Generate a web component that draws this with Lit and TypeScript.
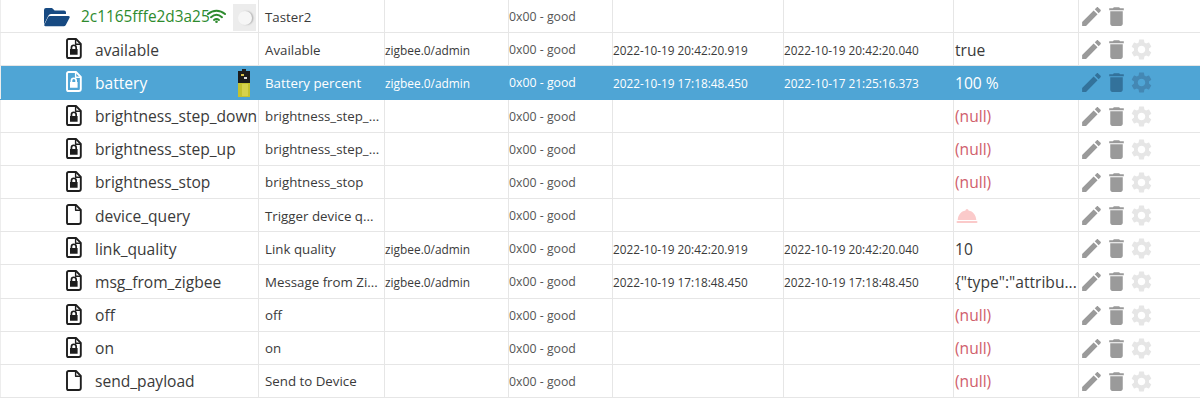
import { LitElement, html, css, svg } from "lit";
import { customElement } from "lit/decorators.js";

const PENCIL = "M20.71,7.04C21.1,6.65 21.1,6 20.71,5.63L18.37,3.29C18,2.9 17.35,2.9 16.96,3.29L15.12,5.12L18.87,8.87M3,17.25V21H6.75L17.81,9.93L14.06,6.18L3,17.25Z";
const TRASH = "M6 19c0 1.1.9 2 2 2h8c1.1 0 2-.9 2-2V7H6v12zM19 4h-3.5l-1-1h-5l-1 1H5v2h14V4z";
const GEAR = "M19.14,12.94c0.04-0.3,0.06-0.61,0.06-0.94c0-0.32-0.02-0.64-0.07-0.94l2.03-1.58c0.18-0.14,0.23-0.41,0.12-0.61l-1.92-3.32c-0.12-0.22-0.37-0.29-0.59-0.22l-2.39,0.96c-0.5-0.38-1.03-0.7-1.62-0.94L14.4,2.81c-0.04-0.24-0.24-0.41-0.48-0.41h-3.84c-0.24,0-0.43,0.17-0.47,0.41L9.25,5.35C8.66,5.59,8.12,5.92,7.63,6.29L5.24,5.33c-0.22-0.08-0.47,0-0.59,0.22L2.74,8.87C2.62,9.08,2.66,9.34,2.86,9.48l2.03,1.58C4.84,11.36,4.8,11.69,4.8,12s0.02,0.64,0.07,0.94l-2.03,1.58c-0.18,0.14-0.23,0.41-0.12,0.61l1.92,3.32c0.12,0.22,0.37,0.29,0.59,0.22l2.39-0.96c0.5,0.38,1.03,0.7,1.62,0.94l0.36,2.54c0.05,0.24,0.24,0.41,0.48,0.41h3.84c0.24,0,0.44-0.17,0.47-0.41l0.36-2.54c0.59-0.24,1.13-0.56,1.62-0.94l2.39,0.96c0.22,0.08,0.47,0,0.59-0.22l1.92-3.32c0.12-0.22,0.07-0.47-0.12-0.61L19.14,12.94z M12,15.6c-1.98,0-3.6-1.62-3.6-3.6s1.62-3.6,3.6-3.6s3.6,1.62,3.6,3.6S13.98,15.6,12,15.6z";

interface Row {
  name: string;
  desc: string;
  admin?: boolean;
  ts?: string;
  lc?: string;
  val?: string;
  kind?: "null" | "bell";
  locked?: boolean;
  sel?: boolean;
  battery?: boolean;
}

const D1 = "2022-10-19 20:42:20.919";
const D2 = "2022-10-19 20:42:20.040";
const D3 = "2022-10-19 17:18:48.450";

const rows: Row[] = [
  { name: "available", desc: "Available", admin: true, ts: D1, lc: D2, val: "true", locked: true },
  { name: "battery", desc: "Battery percent", admin: true, ts: D3, lc: "2022-10-17 21:25:16.373", val: "100 %", locked: true, sel: true, battery: true },
  { name: "brightness_step_down", desc: "brightness_step_...", kind: "null", locked: true },
  { name: "brightness_step_up", desc: "brightness_step_...", kind: "null", locked: true },
  { name: "brightness_stop", desc: "brightness_stop", kind: "null", locked: true },
  { name: "device_query", desc: "Trigger device q...", kind: "bell" },
  { name: "link_quality", desc: "Link quality", admin: true, ts: D1, lc: D2, val: "10", locked: true },
  { name: "msg_from_zigbee", desc: "Message from Zi...", admin: true, ts: D3, lc: D3, val: '{"type":"attribu...', locked: true },
  { name: "off", desc: "off", kind: "null", locked: true },
  { name: "on", desc: "on", kind: "null", locked: true },
  { name: "send_payload", desc: "Send to Device", kind: "null" },
];

const icon = (d: string, cls: string) => html`<svg class=${cls} viewBox="0 0 24 24"><path d=${d}></path></svg>`;

const fileIcon = (locked?: boolean) => html`<svg class="file" viewBox="0 0 16 21">
  <path class="outline" d="M2.6 1H10l4.8 4.8V18a2 2 0 0 1-2 2H2.6a1.6 1.6 0 0 1-1.6-1.6V2.6A1.6 1.6 0 0 1 2.6 1Z"></path>
  <path class="outline thin" d="M9.6 1.2V6.2h5"></path>
  ${locked
    ? svg`<path class="lock" d="M4.6 11V9.6a3.2 3.2 0 0 1 6.4 0V11h.6v5.8H4V11Zm1.7 0h3V9.6a1.5 1.5 0 0 0-3 0Z"></path>`
    : ""}
</svg>`;

@customElement("app-root")
export class AppRoot extends LitElement {
  static styles = css`
    :host { display: block; width: 1200px; height: 400px; overflow: hidden; background: #fff; font-family: "Open Sans", "Noto Sans", sans-serif; color: #3a3a3a; }
    .row { display: grid; grid-template-columns: 259px 126px 124px 104px 171px 170px 125px 121px; height: 33.18px; box-sizing: border-box; border-bottom: 1px solid #e6e6e6; }
    .row.sel { background: #4fa5d5; color: #fff; border-bottom-color: #4fa5d5; }
    .cell { display: flex; align-items: center; min-width: 0; box-sizing: border-box; border-right: 1px solid #e6e6e6; white-space: nowrap; overflow: hidden; padding-top: 1px; position: relative; }
    .row.sel .cell { border-right-color: #4fa5d5; }
    .c-name { padding-left: 65px; font-size: 15.6px; gap: 13px; overflow: visible; border-left: 1px solid #ededed; }
    .c-folder { padding-left: 42px; gap: 11px; color: #2e8b2e; font-size: 15.4px; border-left: 1px solid #ededed; }
    .c-admin { padding-left: 0; font-size: 11.9px; }
    .c-q { padding-left: 0; font-size: 12.3px; color: #555; }
    .sel .c-q { color: #fff; }
    .c-date { font-size: 11.8px; padding-left: 0; }
    .c-val { font-size: 15.6px; padding-left: 1px; }
    .c-desc { font-size: 13.3px; padding-left: 6px; }
    .null { color: #d0606c; }
    .file { width: 16px; height: 21px; flex: none; margin-top: -2px; }
    .outline { fill: none; stroke: #1e1e1e; stroke-width: 1.9; stroke-linejoin: round; }
    .outline.thin { stroke-width: 1.4; }
    .lock { fill: #1e1e1e; fill-rule: evenodd; }
    .sel .outline { stroke: #fff; }
    .sel .lock { fill: #fff; }
    .folder { width: 27px; height: 20px; flex: none; fill: #174a82; }
    .wifi { position: absolute; left: 206px; top: 9px; width: 19px; height: 14px; fill: none; stroke: #2e8b2e; stroke-width: 2; stroke-linecap: round; }
    .wifi circle { fill: #2e8b2e; stroke: none; }
    .thumb { position: absolute; left: 232px; top: 4px; width: 23px; height: 27px; background: #ececec; display: flex; align-items: center; justify-content: center; }
    .thumb i { display: block; width: 14px; height: 14px; border-radius: 50%; background: #f6f6f6; box-shadow: 1.5px 0 1.5px #b8b8b8; }
    .battery { position: absolute; left: 236px; top: 3px; width: 14px; height: 29px; }
    .actions { padding-left: 0; border-right: none; }
    .act { width: 25px; height: 25px; flex: none; fill: #9a9a9a; }
    .act.gear { fill: #e6e6e6; }
    .sel .act { fill: #33729b; }
    .sel .act.gear { fill: #4488b4; }
    .bell { width: 22px; height: 16px; fill: #fbcaca; margin-left: 1px; }
  `;

  private actions(gear = true) {
    return html`<div class="cell actions">
      ${icon(PENCIL, "act")}${icon(TRASH, "act")}${gear ? icon(GEAR, "act gear") : ""}
    </div>`;
  }

  render() {
    return html`
      <div class="row">
        <div class="cell c-folder">
          <svg class="folder" viewBox="0 0 27 20"><path d="M1 3a2 2 0 0 1 2-2h6l2.600 2.600h9.400a2 2 0 0 1 2 2V7H8a3 3 0 0 0-2.700 1.700L1 17.500Z"></path><path d="M7 9h18.500c1 0 1.500.8 1.100 1.700L22.800 18a2.400 2.400 0 0 1-2.100 1.200H2.500c-1 0-1.500-.8-1.100-1.700L5 10.200A2.400 2.400 0 0 1 7 9Z"></path></svg>
          <span>2c1165fffe2d3a25</span>
          <svg class="wifi" viewBox="0 0 19 14"><path d="M1 5c5-4.500 12-4.500 17 0"></path><path d="M4 8.200c3.400-3 7.600-3 11 0"></path><path d="M7 11c1.500-1.200 3.500-1.200 5 0"></path><circle cx="9.500" cy="12.700" r="1.300"></circle></svg>
          <div class="thumb"><i></i></div>
        </div>
        <div class="cell c-desc">Taster2</div>
        <div class="cell c-admin"></div>
        <div class="cell c-q">0x00 - good</div>
        <div class="cell c-date"></div>
        <div class="cell c-date"></div>
        <div class="cell c-val"></div>
        ${this.actions(false)}
      </div>
      ${rows.map(
        (r) => html`<div class="row ${r.sel ? "sel" : ""}">
          <div class="cell c-name">
            ${fileIcon(r.locked)}<span>${r.name}</span>
            ${r.battery
              ? html`<svg class="battery" viewBox="0 0 14 29"><rect x="5" y="0" width="4" height="2" fill="#222"></rect><rect x="1" y="2" width="12" height="26" fill="#1c1c1c"></rect><rect x="1" y="14" width="12" height="14" fill="#c4c22e"></rect><rect x="5" y="15" width="6" height="12" fill="#d6d24c"></rect><rect x="4" y="5" width="3" height="2" fill="#d8c04a"></rect><rect x="7" y="8" width="3" height="2" fill="#ddd"></rect></svg>`
              : ""}
          </div>
          <div class="cell c-desc">${r.desc}</div>
          <div class="cell c-admin">${r.admin ? "zigbee.0/admin" : ""}</div>
          <div class="cell c-q">0x00 - good</div>
          <div class="cell c-date">${r.ts ?? ""}</div>
          <div class="cell c-date">${r.lc ?? ""}</div>
          <div class="cell c-val">
            ${r.kind === "null"
              ? html`<span class="null">(null)</span>`
              : r.kind === "bell"
                ? html`<svg class="bell" viewBox="0 0 22 16"><path d="M11 1a1.500 1.500 0 0 1 1.500 1.500C17 3.300 20 7 20.300 12H1.700C2 7 5 3.300 9.500 2.500A1.500 1.500 0 0 1 11 1Z"></path><rect x="0.500" y="13" width="21" height="2" rx="1"></rect></svg>`
                : html`<span>${r.val}</span>`}
          </div>
          ${this.actions()}
        </div>`
      )}
    `;
  }
}
